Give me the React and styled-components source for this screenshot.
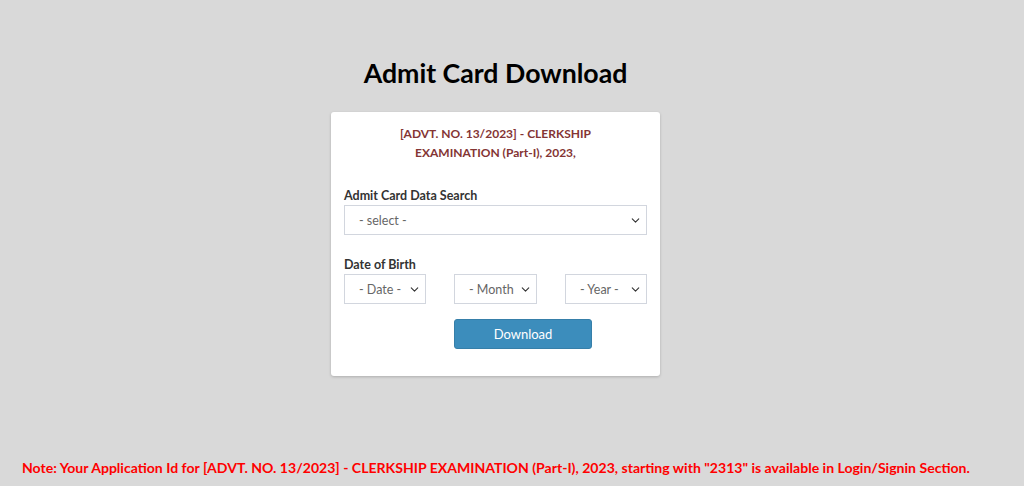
import React from 'react';
import styled, {createGlobalStyle} from 'styled-components';
import {ChevronDown} from 'lucide-react';

const GlobalStyle = createGlobalStyle`
    html, body {
        margin: 0;
        padding: 0;
        background: #d9d9d9;
        font-family: "Lato", "Noto Sans", sans-serif;
        color: #333;
    }
`;

const Page = styled.div`
    min-height: 486px;
    display: flex;
    flex-direction: column;
    align-items: center;
    padding-right: 33px;
`;

const Title = styled.h1`
    margin: 58px 0 24px;
    font-size: 26.7px;
    line-height: 30px;
    font-weight: 700;
    color: #000;
`;

const Card = styled.div`
    width: 329px;
    box-sizing: border-box;
    padding: 12px 13px 27px;
    background: #fff;
    border-radius: 3px;
    box-shadow: 0 1px 3px rgba(0, 0, 0, 0.2);
`;

const Exam = styled.p`
    margin: 0 20px;
    text-align: center;
    font-size: 12px;
    line-height: 19px;
    font-weight: 700;
    color: #843534;
`;

const Group = styled.div`
    margin-top: ${p => p.$top}px;
`;

const Label = styled.label`
    display: block;
    font-size: 12.5px;
    line-height: 18px;
    font-weight: 700;
    color: #333;
`;

const SelectWrap = styled.div`
    position: relative;
    width: ${p => p.$width || '100%'};
`;

const Select = styled.select`
    appearance: none;
    width: 100%;
    height: 30px;
    box-sizing: border-box;
    padding: 0 22px 0 14px;
    border: 1px solid #d2d6de;
    border-radius: 0;
    background: #fff;
    font-family: inherit;
    font-size: 12.5px;
    color: #666;
    outline: none;
`;

const Arrow = styled(ChevronDown)`
    position: absolute;
    right: 5px;
    top: 9px;
    pointer-events: none;
    color: #333;
`;

const DobRow = styled.div`
    display: flex;
    justify-content: space-between;
`;

const ButtonRow = styled.div`
    margin-top: 15px;
    padding-left: 110px;
`;

const Button = styled.button`
    width: 138px;
    height: 30px;
    border: 1px solid #367fa9;
    border-radius: 3px;
    background: #3c8dbc;
    color: #fff;
    font-family: inherit;
    font-size: 13px;
    cursor: pointer;
`;

const Note = styled.p`
    align-self: stretch;
    margin: 82px -33px 0 0;
    padding-left: 22px;
    font-size: 14.07px;
    line-height: 20px;
    font-weight: 700;
    color: #ff0000;
    white-space: nowrap;
`;

const Dropdown = ({width, placeholder}) => (
    <SelectWrap $width={width}>
        <Select defaultValue="">
            <option value="">{placeholder}</option>
        </Select>
        <Arrow size={13} strokeWidth={2}/>
    </SelectWrap>
);

const App = () => {
    const exam = '[ADVT. NO. 13/2023] - CLERKSHIP EXAMINATION (Part-I), 2023,';

    return (
        <>
            <GlobalStyle/>
            <Page>
                <Title>Admit Card Download</Title>
                <Card>
                    <Exam>{exam}</Exam>
                    <Group $top={25}>
                        <Label>Admit Card Data Search</Label>
                        <Dropdown placeholder="- select -"/>
                    </Group>
                    <Group $top={21}>
                        <Label>Date of Birth</Label>
                        <DobRow>
                            <Dropdown width="82px" placeholder="- Date -"/>
                            <Dropdown width="83px" placeholder="- Month -"/>
                            <Dropdown width="82px" placeholder="- Year -"/>
                        </DobRow>
                    </Group>
                    <ButtonRow>
                        <Button type="button">Download</Button>
                    </ButtonRow>
                </Card>
                <Note>
                    Note: Your Application Id for [ADVT. NO. 13/2023] - CLERKSHIP EXAMINATION (Part-I), 2023, starting with "2313" is available in Login/Signin Section.
                </Note>
            </Page>
        </>
    );
};

export default App;
